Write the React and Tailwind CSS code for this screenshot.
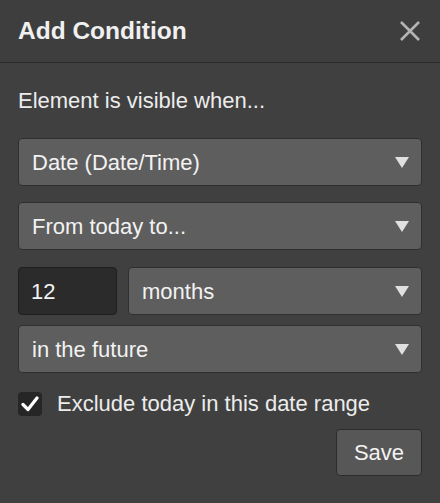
import React from 'react';

const Caret = () => (
  <svg width="14" height="11" viewBox="0 0 14 11" className="shrink-0">
    <path d="M0 0 L14 0 L7 11 Z" fill="#e0e0e0" />
  </svg>
);

const Select = ({ label, className = '' }) => (
  <div
    className={`flex h-[48px] items-center justify-between rounded-[4px] border border-[#2f2f2f] bg-[#5e5e5e] pl-[13px] pr-[12px] text-[22px] text-[#f2f2f2] ${className}`}
  >
    <span>{label}</span>
    <Caret />
  </div>
);

export default function App() {
  return (
    <div className="flex h-[503px] w-[440px] flex-col bg-[#404040] font-['Liberation_Sans',Arial,sans-serif] text-[#eeeeee]">
      {/* Header */}
      <div className="flex h-[63px] items-center justify-between border-b border-[#2c2c2c] bg-[#3e3e3e] pl-[18px] pr-[19px]">
        <h1 className="text-[24.5px] font-bold text-[#f0f0f0]">Add Condition</h1>
        <svg width="22" height="22" viewBox="0 0 22 22">
          <path d="M2 2 L20 20 M20 2 L2 20" stroke="#b4b4b4" strokeWidth="2.6" />
        </svg>
      </div>

      {/* Body */}
      <div className="flex flex-col px-[18px] pt-[25px]">
        <p className="text-[22px] leading-[26px] text-[#ececec]">Element is visible when...</p>

        <Select label="Date (Date/Time)" className="mt-[24px]" />
        <Select label="From today to..." className="mt-[16px]" />

        <div className="mt-[17px] flex gap-[11px]">
          <div className="flex h-[48px] w-[99px] items-center rounded-[4px] border border-[#1e1e1e] bg-[#2b2b2b] pl-[12px] text-[22px] text-[#f2f2f2]">
            12
          </div>
          <Select label="months" className="flex-1" />
        </div>

        <Select label="in the future" className="mt-[10px]" />

        <label className="mt-[18px] flex items-center gap-[15px]">
          <span className="flex h-[24px] w-[24px] items-center justify-center rounded-[4px] bg-[#262626]">
            <svg width="18" height="16" viewBox="0 0 18 16">
              <path d="M2 8.5 L7 13.5 L16 2" fill="none" stroke="#ffffff" strokeWidth="3.2" strokeLinecap="round" strokeLinejoin="round" />
            </svg>
          </span>
          <span className="text-[22px] leading-[26px] text-[#ececec]">Exclude today in this date range</span>
        </label>

        <div className="mt-[12px] flex justify-end">
          <button className="h-[47px] w-[86px] rounded-[4px] border border-[#2c2c2c] bg-[#575757] text-[22px] text-[#f2f2f2]">
            Save
          </button>
        </div>
      </div>
    </div>
  );
}
